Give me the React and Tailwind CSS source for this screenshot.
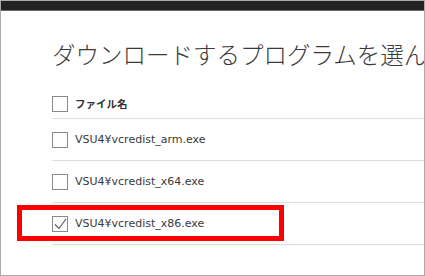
import React from "react";

function Box({ checked }) {
  return (
    <div className="w-[16px] h-[16px] border border-[#8a8a8a] bg-white shrink-0 relative">
      {checked && (
        <svg viewBox="0 0 16 16" className="absolute -left-px -top-px w-[16px] h-[16px]">
          <polyline points="3,8.5 7,12.5 14,3" fill="none" stroke="#555" strokeWidth="1.1" />
        </svg>
      )}
    </div>
  );
}

function Row({ name, checked }) {
  return (
    <div className="h-[42px] border-b border-[#dcdcdc] flex items-center gap-[7px]">
      <Box checked={checked} />
      <span
        className="text-[11px] text-[#3a3a3a] leading-none"
        style={{ fontFamily: '"DejaVu Sans", "Noto Sans CJK JP", sans-serif' }}
      >
        {name}
      </span>
    </div>
  );
}

export default function App() {
  return (
    <div
      className="relative w-[425px] h-[276px] border border-[#ababab] bg-white overflow-hidden"
      style={{ fontFamily: '"Noto Sans", "Noto Sans CJK JP", sans-serif' }}
    >
      <div className="h-[9px] bg-[#232323] border-b border-[#6a6a6a] box-content" />
      <div className="pl-[51px]">
        <div className="pt-[31px] pr-[2px] overflow-hidden whitespace-nowrap">
          <div
            className="text-[23.5px] leading-[24px] h-[24px] text-[#3a3a3a] font-light"
            style={{ fontFamily: '"Noto Sans CJK JP", sans-serif' }}
          >
            ダウンロードするプログラムを選んでください
          </div>
        </div>
        <div className="mt-[24px] h-[29px] border-b border-[#dcdcdc] flex items-center gap-[7px]">
          <Box />
          <span
            className="text-[10.5px] font-bold text-[#333] leading-none"
            style={{ fontFamily: '"Noto Sans CJK JP", sans-serif' }}
          >
            ファイル名
          </span>
        </div>
        <Row name="VSU4¥vcredist_arm.exe" />
        <Row name="VSU4¥vcredist_x64.exe" />
        <Row name="VSU4¥vcredist_x86.exe" checked />
      </div>
      <div className="absolute left-[16px] top-[204px] w-[267px] h-[36px] border-[5px] border-[#ff0000]" />
    </div>
  );
}
